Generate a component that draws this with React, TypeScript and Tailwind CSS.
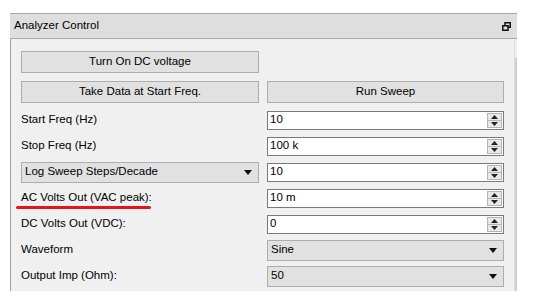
import React from "react"

const font = { fontFamily: '"Liberation Sans", Arial, sans-serif' }

function DownTri() {
  return (
    <svg width="8" height="5" viewBox="0 0 8 5" className="shrink-0">
      <path d="M0 0 H8 L4 5 Z" fill="#111" />
    </svg>
  )
}

function QtButton({ children }: { children: React.ReactNode }) {
  return (
    <div className="h-[22px] flex items-center justify-center bg-[#e1e1e1] border border-[#adadad] text-[11.5px] text-black">
      {children}
    </div>
  )
}

function Combo({ value }: { value: string }) {
  return (
    <div className="h-[21px] flex items-center justify-between bg-[#e1e1e1] border border-[#adadad] pl-[3px] pr-[6px] text-[11.5px] text-black">
      <span>{value}</span>
      <DownTri />
    </div>
  )
}

function SpinBox({ value }: { value: string }) {
  return (
    <div className="h-[19px] flex items-stretch bg-white border border-[#7a7a7a] text-[11.5px] text-black">
      <div className="flex-1 flex items-center pl-[2px]">{value}</div>
      <div className="w-[15px] my-[1px] mr-[1px] flex flex-col bg-[#e8e8e8] border border-[#b5b5b5]">
        <div className="flex-1 flex items-center justify-center border-b border-[#b5b5b5]">
          <svg width="7" height="4" viewBox="0 0 7 4">
            <path d="M0 4 H7 L3.5 0 Z" fill="#222" />
          </svg>
        </div>
        <div className="flex-1 flex items-center justify-center">
          <svg width="7" height="4" viewBox="0 0 7 4">
            <path d="M0 0 H7 L3.5 4 Z" fill="#222" />
          </svg>
        </div>
      </div>
    </div>
  )
}

function Label({ children }: { children: React.ReactNode }) {
  return <div className="flex items-center text-[11.5px] text-black">{children}</div>
}

export default function App() {
  const rows: { left: React.ReactNode; right: React.ReactNode }[] = [
    { left: <Label>Start Freq (Hz)</Label>, right: <SpinBox value="10" /> },
    { left: <Label>Stop Freq (Hz)</Label>, right: <SpinBox value="100 k" /> },
    { left: <Combo value="Log Sweep Steps/Decade" />, right: <SpinBox value="10" /> },
    {
      left: (
        <div className="relative">
          <Label>AC Volts Out (VAC peak):</Label>
          {/* red annotation underline */}
          <div className="absolute left-[-5px] top-[17px] w-[135px] h-[3px] rounded-full bg-[#e5131a]" />
        </div>
      ),
      right: <SpinBox value="10 m" />
    },
    { left: <Label>DC Volts Out (VDC):</Label>, right: <SpinBox value="0" /> },
    { left: <Label>Waveform</Label>, right: <Combo value="Sine" /> },
    { left: <Label>Output Imp (Ohm):</Label>, right: <Combo value="50" /> }
  ]

  return (
    <div className="w-[533px] h-[304px] bg-white pt-[13px] pl-[10px]" style={font}>
      <div className="w-[507px] h-[278px] flex flex-col">
        <div className="h-[26px] shrink-0 flex items-center justify-between bg-[#dedede] border-t border-b border-[#a8a8a8] pl-[4px] pr-[6px] text-[11.5px] text-black">
          <span>Analyzer Control</span>
          <svg width="9" height="9" viewBox="0 0 9 9">
            <rect x="3" y="0.75" width="5.25" height="4.5" fill="none" stroke="#111" strokeWidth="1.5" />
            <rect x="0.75" y="3.75" width="5.25" height="4.5" fill="#dedede" stroke="#111" strokeWidth="1.5" />
          </svg>
        </div>
        <div className="flex-1 flex bg-[#f0f0f0] border-l border-[#a0a0a0]">
          <div className="flex-1 flex flex-col pt-[12px] pl-[10px] pr-[10px] border-r border-[#dcdcdc]">
            <div className="grid grid-cols-[238px_237px] gap-x-[8px]">
              <QtButton>Turn On DC voltage</QtButton>
              <div />
            </div>
            <div className="grid grid-cols-[238px_237px] gap-x-[8px] mt-[8px]">
              <QtButton>Take Data at Start Freq.</QtButton>
              <QtButton>Run Sweep</QtButton>
            </div>
            <div className="mt-[4px] flex flex-col">
              {rows.map((r, i) => (
                <div key={i} className="h-[26px] grid grid-cols-[238px_237px] gap-x-[8px] items-center">
                  <div>{r.left}</div>
                  {r.right}
                </div>
              ))}
            </div>
          </div>
          <div className="w-[3px] flex flex-col">
            <div className="h-[19px]" />
            <div className="flex-1 bg-[#cdcdcd] w-[2px]" />
          </div>
        </div>
      </div>
    </div>
  )
}
